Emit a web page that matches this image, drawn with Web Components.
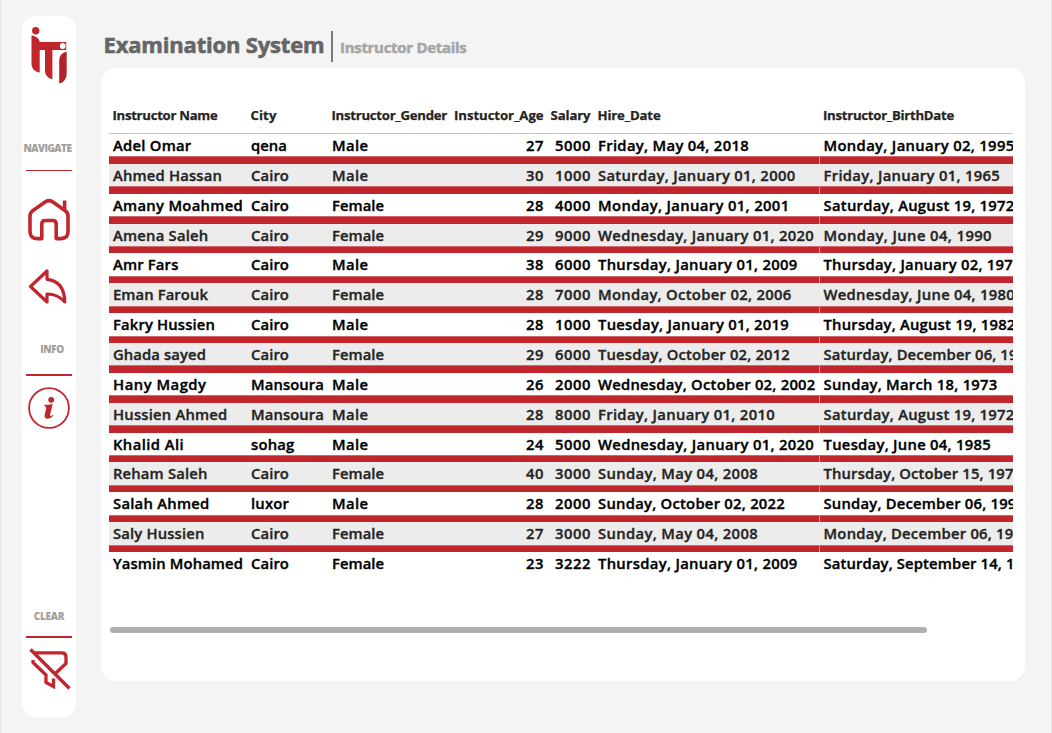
<!DOCTYPE html>
<html lang="en">
<head>
<meta charset="utf-8">
<title>Examination System</title>
<style>
html,body{margin:0;height:100%;overflow:hidden;background:#f4f4f4}
body{font-family:"Open Sans","Noto Sans",sans-serif}
</style>
</head>
<body>
<exam-app></exam-app>
<script>
const define=(name,html,Base=HTMLElement)=>{
  const t=document.createElement('template');t.innerHTML=html;
  customElements.define(name,class extends Base{
    constructor(){super();this.attachShadow({mode:'open'}).append(t.content.cloneNode(true));}
  });
};

// One line of text, tracked so that it takes exactly the width in "w".
class FitText extends HTMLElement{
  constructor(){
    super();
    this.attachShadow({mode:'open'}).innerHTML='<style>:host{display:inline-block;white-space:pre}span{display:inline-block}</style><span><slot></slot></span>';
  }
  connectedCallback(){
    const w=parseFloat(this.getAttribute('w'));
    if(!w)return;
    const s=this.shadowRoot.querySelector('span');
    const n=this.textContent.length;
    s.style.letterSpacing=((w-s.getBoundingClientRect().width)/n)+'px';
  }
}

define('side-label',`<style>
:host{display:flex;flex-direction:column;align-items:center}
.t{font-size:10px;font-weight:800;line-height:14px;color:#a19f9a}
.r{height:1.6px;margin-top:var(--gap,15px);width:46px;background:#c0262c}
</style><div class="t"><slot></slot></div><div class="r"></div>`);

define('iti-logo',`<style>:host{display:block;width:40px;height:60px}svg{display:block}</style>
<svg width="40" height="60" viewBox="0 0 40 60"><g fill="#c0262c">
<circle cx="5.7" cy="4.8" r="3.7"/>
<path d="M1.5 9.5C6 10 9.700 13 9.700 16H36.200V24H22.400V53.300C18 52.500 15 49 15 44.500V24H9.700V46.500C5 46 1.500 42.500 1.500 37.500Z"/>
<path fill="#b32429" d="M36.700 25.800V47C36.700 53 33.500 56.800 29.200 57.500V35C29.200 30 32 26.500 36.700 25.800Z"/></g>
<circle cx="32.700" cy="20" r="2.900" fill="#fff"/></svg>`);

define('home-icon',`<style>:host{display:block}svg{display:block}</style>
<svg width="44" height="44" viewBox="0 0 44 44" fill="none" stroke="#c0262c" stroke-width="3.600" stroke-linejoin="round">
<path d="M14.800 40.600H10Q3 40.600 3 33.600V18Q3 14.500 6 12.500L18.500 3.800Q22 1.500 25.500 3.800L38 12.500Q41 14.500 41 18V33.600Q41 40.600 34 40.600H29.200V26Q29.200 22.500 25.700 22.500H18.300Q14.800 22.500 14.800 26Z"/><path d="M37.600 13V2.500"/></svg>`);

define('back-icon',`<style>:host{display:block}svg{display:block}</style>
<svg width="40" height="38" viewBox="0 0 40 38" fill="none" stroke="#c0262c" stroke-width="3.200" stroke-linejoin="round">
<path d="M2.500 18.500L19 3V11.300C31 12.500 36.500 20 36.800 34C31.500 28 26.500 26 19 26V34Z"/></svg>`);

define('info-icon',`<style>:host{display:block}svg{display:block}</style>
<svg width="42" height="42" viewBox="0 0 42 42"><circle cx="21" cy="21" r="19.900" fill="none" stroke="#c0262c" stroke-width="1.800"/>
<g fill="#c0262c"><circle cx="23.200" cy="12.800" r="2.900"/><path d="M16.600 17.800Q20.500 17.800 24.700 16.900L22.200 27.300Q21.700 29.300 22.700 29.200Q23.700 29 24.700 27.800L25.500 28.500Q22.700 32 19.300 31.800Q15.900 31.500 16.700 27.800L18.200 21.200Q18.500 19.400 16.400 19.200Z"/></g></svg>`);

define('clear-icon',`<style>:host{display:block}svg{display:block}</style>
<svg width="42" height="44" viewBox="0 0 42 44" fill="none" stroke="#c0262c" stroke-width="3.300">
<path d="M1.500 2.500L40.500 41.500"/><path d="M5 5.800H33Q37 5.800 37 10V16.500L25.800 27"/><path d="M4 13V15.500L17 28V35.500L24.500 39.500V31.500"/></svg>`);

define('side-bar',`<style>
:host{display:flex;flex-direction:column;align-items:center;width:54px;height:701px;background:#fff;border-radius:14px}
iti-logo{margin:10px 0 0 1px}
.nav{margin-top:54.600px;--gap:15px}
.nav fit-text{transform:translateX(-1.500px)}
.info{margin:36px 0 0;--gap:18px}
.info fit-text{transform:translateX(3px)}
home-icon{margin-top:26.800px}
back-icon{margin:26px 3px 0 0}
info-icon{margin-top:11px}
.clear{margin-top:auto;--gap:13px}
clear-icon{margin:9.400px 0 26px 2px}
</style>
<iti-logo></iti-logo>
<side-label class="nav"><fit-text w="48">NAVIGATE</fit-text></side-label>
<home-icon></home-icon><back-icon></back-icon>
<side-label class="info"><fit-text w="23.500">INFO</fit-text></side-label>
<info-icon></info-icon>
<side-label class="clear"><fit-text w="30.500">CLEAR</fit-text></side-label>
<clear-icon></clear-icon>`);

define('page-title',`<style>
:host{display:flex;height:32px;align-items:stretch;white-space:nowrap}
.a{font-size:22px;font-weight:700;line-height:27px;color:#666;-webkit-text-stroke:.6px #666;width:227.500px}
.l{width:1.500px;height:31px;background:#7a7a7a}
.b{font-size:15px;font-weight:700;line-height:33px;color:#a6a6a6;-webkit-text-stroke:.5px #a6a6a6;margin-left:7.500px}
</style><div class="a"><fit-text w="221">Examination System</fit-text></div><div class="l"></div><div class="b"><fit-text w="126.500">Instructor Details</fit-text></div>`);

const HEAD=[['Instructor Name',105],['City',26],['Instructor_Gender',115.5],['Instuctor_Age',89.5],['Salary',40],['Hire_Date',63],['Instructor_BirthDate',131]];
const CITY={Cairo:38,qena:36,Mansoura:73,sohag:43.5,luxor:38};
const ROWS=[
['Adel Omar',78.5,'qena','Male',27,5000,'Friday, May 04, 2018',151,'Monday, January 02, 1995',191],
['Ahmed Hassan',109,'Cairo','Male',30,1000,'Saturday, January 01, 2000',197.5,'Friday, January 01, 1965',176.5],
['Amany Moahmed',130,'Cairo','Female',28,4000,'Monday, January 01, 2001',191.5,'Saturday, August 19, 1972',191],
['Amena Saleh',95.5,'Cairo','Female',29,9000,'Wednesday, January 01, 2020',216,'Monday, June 04, 1990',168.5],
['Amr Fars',65.5,'Cairo','Male',38,6000,'Thursday, January 01, 2009',199.5,'Thursday, January 02, 197',189.5],
['Eman Farouk',95,'Cairo','Female',28,7000,'Monday, October 02, 2006',193.5,'Wednesday, June 04, 1980',191.5],
['Fakry Hussien',102,'Cairo','Male',28,1000,'Tuesday, January 01, 2019',191,'Thursday, August 19, 1982',192],
['Ghada sayed',93,'Cairo','Female',29,6000,'Tuesday, October 02, 2012',192,'Saturday, December 06, 19',194],
['Hany Magdy',93.5,'Mansoura','Male',26,2000,'Wednesday, October 02, 2002',217.5,'Sunday, March 18, 1973',174],
['Hussien Ahmed',114.5,'Mansoura','Male',28,8000,'Friday, January 01, 2010',177,'Saturday, August 19, 1972',191],
['Khalid Ali',71,'sohag','Male',24,5000,'Wednesday, January 01, 2020',216,'Tuesday, June 04, 1985',167.5],
['Reham Saleh',94.5,'Cairo','Female',40,3000,'Sunday, May 04, 2008',160,'Thursday, October 15, 197',190],
['Salah Ahmed',96.5,'luxor','Male',28,2000,'Sunday, October 02, 2022',187,'Sunday, December 06, 199',193],
['Saly Hussien',91.5,'Cairo','Female',27,3000,'Sunday, May 04, 2008',160,'Monday, December 06, 19',190],
['Yasmin Mohamed',130,'Cairo','Female',23,3222,'Thursday, January 01, 2009',199.5,'Saturday, September 14, 1',191]];

const GRID='display:grid;grid-template-columns:138px 81px 123px 96px 47px 225.500px 193.500px';
class InstructorTable extends HTMLElement{
  constructor(){
    super();
    const f=(t,w)=>`<fit-text w="${w}">${t}</fit-text>`;
    const line=cs=>cs.map(c=>`<div class="c">${c}</div>`).join('');
    this.attachShadow({mode:'open'}).innerHTML=`<style>
:host{display:block;width:904px;overflow:hidden}
.h,.row{${GRID};width:904px}
.c{padding-left:4px;white-space:nowrap}
.c:nth-child(4),.c:nth-child(5){padding:0 3px 0 0;text-align:right}
.h .c{margin-left:-.5px}
.h .c:nth-child(4),.h .c:nth-child(5){padding-right:3.500px}
.h{height:33px;font-size:13.200px;font-weight:700;line-height:31px;color:#252423;border-bottom:1px solid #99ccff;-webkit-text-stroke:.25px}
.row{height:22.370px;font-size:14.800px;font-weight:600;line-height:23.400px;color:#000;-webkit-text-stroke:.35px}
.row.alt{background:#ececec;color:#252423;line-height:22.600px}
.bar{height:7.500px;background:linear-gradient(to right,transparent 710px,#e58d90 710px,#e58d90 711px,transparent 711px),#c0262c;box-shadow:inset 0 1px #d2676b}
</style><div class="h">${line(HEAD.map(h=>f(...h)))}</div>`+
    ROWS.map((r,i)=>`<div class="row${i%2?' alt':''}">${line([f(r[0],r[1]),f(r[2],CITY[r[2]]),f(r[3],r[3]=='Male'?36.5:52),f(r[4],18),f(r[5],36),f(r[6],r[7]),f(r[8],r[9])])}</div>${i<14?'<div class="bar"></div>':''}`).join('');
  }
}

define('report-card',`<style>
:host{display:block;box-sizing:border-box;width:924px;height:613px;background:#fff;border-radius:15px;padding:32px 0 0 8px}
.s{width:817px;height:6px;border-radius:3px;background:#afafaf;margin:53px 0 0 1px}
</style><instructor-table></instructor-table><div class="s"></div>`);

define('exam-app',`<style>
:host{display:flex;box-sizing:border-box;width:1052px;height:733px;padding:16px 0 0 21px;background:#f4f4f4;border-left:1px solid #e6e6e6;box-shadow:inset -1px 0 #e6e6e6,inset -2px 0 #f8f8f8}
main{margin:15px 0 0 25px}
page-title{margin:0 0 5px 2.500px}
</style><side-bar></side-bar><main><page-title></page-title><report-card></report-card></main>`);

customElements.define('instructor-table',InstructorTable);
customElements.define('fit-text',FitText);
</script>
</body>
</html>
